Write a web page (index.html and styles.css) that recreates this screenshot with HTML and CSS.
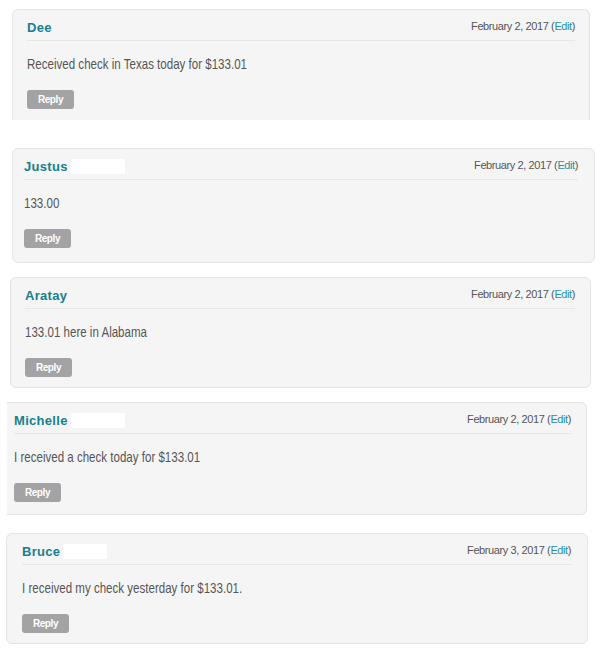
FILE: index.html
```html
<!DOCTYPE html>
<html lang="en">
<head>
    <meta charset="UTF-8">
    <meta name="viewport" content="width=device-width, initial-scale=1.0">
    <title>Comments</title>
    <link rel="stylesheet" href="styles.css">
</head>
<body>
    <div class="comments">
        <div class="comment comment-dee">
            <div class="comment-head">
                <span class="author">Dee</span>
                <span class="date">February 2, 2017 (<a href="#" class="edit">Edit</a>)</span>
            </div>
            <p class="comment-text">Received check in Texas today for $133.01</p>
            <button class="reply"><span>Reply</span></button>
        </div>

        <div class="comment comment-justus">
            <div class="comment-head">
                <span class="author">Justus <span class="hidden-name name-long"></span></span>
                <span class="date">February 2, 2017 (<a href="#" class="edit">Edit</a>)</span>
            </div>
            <p class="comment-text">133.00</p>
            <button class="reply"><span>Reply</span></button>
        </div>

        <div class="comment comment-aratay">
            <div class="comment-head">
                <span class="author">Aratay</span>
                <span class="date">February 2, 2017 (<a href="#" class="edit">Edit</a>)</span>
            </div>
            <p class="comment-text">133.01 here in Alabama</p>
            <button class="reply"><span>Reply</span></button>
        </div>

        <div class="comment comment-michelle">
            <div class="comment-head">
                <span class="author">Michelle <span class="hidden-name name-long"></span></span>
                <span class="date">February 2, 2017 (<a href="#" class="edit">Edit</a>)</span>
            </div>
            <p class="comment-text">I received a check today for $133.01</p>
            <button class="reply"><span>Reply</span></button>
        </div>

        <div class="comment comment-bruce">
            <div class="comment-head">
                <span class="author">Bruce <span class="hidden-name name-short"></span></span>
                <span class="date">February 3, 2017 (<a href="#" class="edit">Edit</a>)</span>
            </div>
            <p class="comment-text">I received my check yesterday for $133.01.</p>
            <button class="reply"><span>Reply</span></button>
        </div>
    </div>
</body>
</html>
```

FILE: styles.css
```css
* {
    margin: 0;
    padding: 0;
    box-sizing: border-box;
}

body {
    font-family: 'Liberation Sans', Arial, sans-serif;
    background: #fff;
    color: #555;
}

.comments {
    display: flex;
    flex-direction: column;
    padding-top: 9px;
}

.comment {
    background: #f5f5f5;
    border: 1px solid #e4e4e4;
    border-radius: 6px;
    padding: 7px 14px 10px 14px;
}

.comment-head {
    display: flex;
    justify-content: space-between;
    align-items: center;
    height: 18px;
    border-bottom: 1px solid #e6e6e6;
    padding-bottom: 5px;
    box-sizing: content-box;
}

.author {
    font-size: 13px;
    font-weight: bold;
    color: #15808f;
    letter-spacing: 0.3px;
    display: flex;
    align-items: center;
    gap: 3px;
    margin-top: 3px;
}

.hidden-name {
    display: inline-block;
    height: 15px;
    background: #fff;
    border-radius: 2px;
}

.name-long {
    width: 54px;
}

.name-short {
    width: 44px;
}

.date {
    font-size: 11px;
    letter-spacing: -0.4px;
    color: #555;
    margin-top: -1px;
}

.edit {
    color: #2a8fa0;
    text-decoration: none;
}

/* the source screenshot is squeezed sideways */
.comment-text {
    font-size: 15px;
    line-height: 20px;
    color: #555;
    margin: 13px 0 16px;
    transform: scaleX(0.77);
    transform-origin: left center;
    white-space: nowrap;
}

.reply {
    display: flex;
    align-items: center;
    justify-content: center;
    width: 47px;
    height: 19px;
    background: #a3a3a6;
    color: #fff;
    border: none;
    border-radius: 3px;
    font-family: inherit;
    font-size: 10px;
    font-weight: bold;
    letter-spacing: -0.4px;
}

/* each card was clipped a bit differently */
.comment-dee {
    margin: 0 12px 0 12px;
    border-bottom: none;
    border-bottom-left-radius: 0;
    border-bottom-right-radius: 0;
    height: 111px;
}

.comment-justus {
    margin: 28px 7px 0 12px;
    padding-left: 11px;
    padding-right: 16px;
    height: 115px;
}

.comment-aratay {
    margin: 14px 11px 0 10px;
    padding-left: 14px;
    padding-right: 15px;
    height: 111px;
}

.comment-michelle {
    margin: 14px 15px 0 7px;
    padding-left: 7px;
    padding-right: 15px;
    height: 113px;
    border-left: none;
    border-top-left-radius: 0;
    border-bottom-left-radius: 0;
}

.comment-bruce {
    margin: 18px 14px 0 6px;
    padding-left: 15px;
    padding-right: 16px;
    height: 111px;
}
```
